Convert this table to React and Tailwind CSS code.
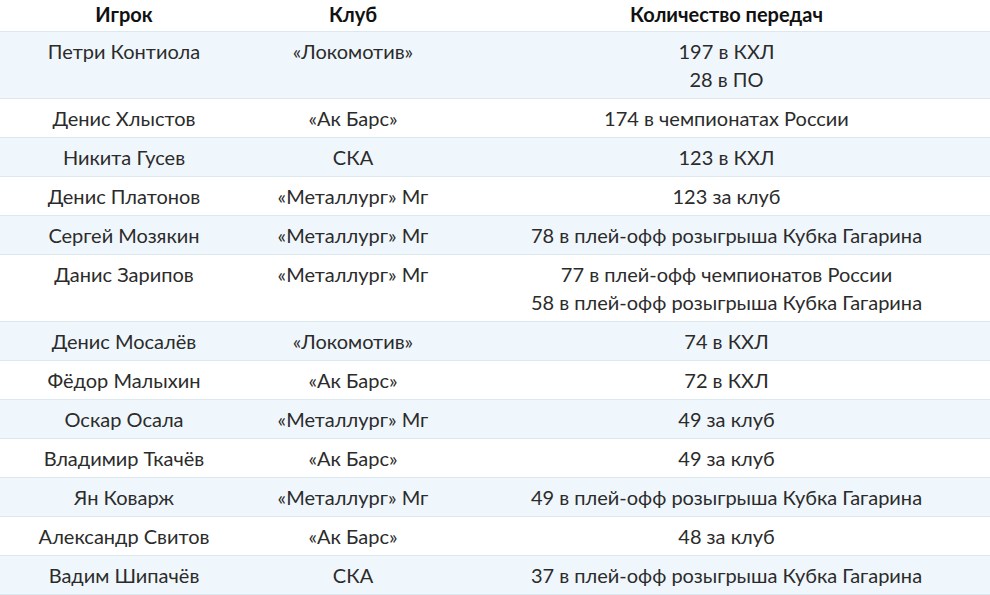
import React from "react";

const rows = [
  ["Петри Контиола", "«Локомотив»", ["197 в КХЛ", "28 в ПО"]],
  ["Денис Хлыстов", "«Ак Барс»", ["174 в чемпионатах России"]],
  ["Никита Гусев", "СКА", ["123 в КХЛ"]],
  ["Денис Платонов", "«Металлург» Мг", ["123 за клуб"]],
  ["Сергей Мозякин", "«Металлург» Мг", ["78 в плей-офф розыгрыша Кубка Гагарина"]],
  ["Данис Зарипов", "«Металлург» Мг", ["77 в плей-офф чемпионатов России", "58 в плей-офф розыгрыша Кубка Гагарина"]],
  ["Денис Мосалёв", "«Локомотив»", ["74 в КХЛ"]],
  ["Фёдор Малыхин", "«Ак Барс»", ["72 в КХЛ"]],
  ["Оскар Осала", "«Металлург» Мг", ["49 за клуб"]],
  ["Владимир Ткачёв", "«Ак Барс»", ["49 за клуб"]],
  ["Ян Коварж", "«Металлург» Мг", ["49 в плей-офф розыгрыша Кубка Гагарина"]],
  ["Александр Свитов", "«Ак Барс»", ["48 за клуб"]],
  ["Вадим Шипачёв", "СКА", ["37 в плей-офф розыгрыша Кубка Гагарина"]],
];

export default function App() {
  return (
    <div className="w-[990px] h-[595px] overflow-hidden bg-white text-[#2b2b2b] text-[20px] leading-[28px]" style={{ fontFamily: "Lato, 'Noto Sans', sans-serif" }}>
      <div className="grid grid-cols-[248px_210px_1fr] font-bold text-[#111111] h-[32px] border-b border-[#dce8ef] items-start">
        <div className="text-center">Игрок</div>
        <div className="text-center">Клуб</div>
        <div className="text-center pl-[5px]">Количество передач</div>
      </div>
      {rows.map((r, i) => (
        <div
          key={i}
          className={`grid grid-cols-[248px_210px_1fr] border-b border-[#dce8ef] py-[5px] ${i % 2 === 0 ? "bg-[#f0f7fc]" : "bg-white"}`}
        >
          <div className="text-center">{r[0]}</div>
          <div className="text-center">{r[1]}</div>
          <div className="text-center pl-[5px]">
            {r[2].map((t, j) => (
              <div key={j}>{t}</div>
            ))}
          </div>
        </div>
      ))}
    </div>
  );
}
